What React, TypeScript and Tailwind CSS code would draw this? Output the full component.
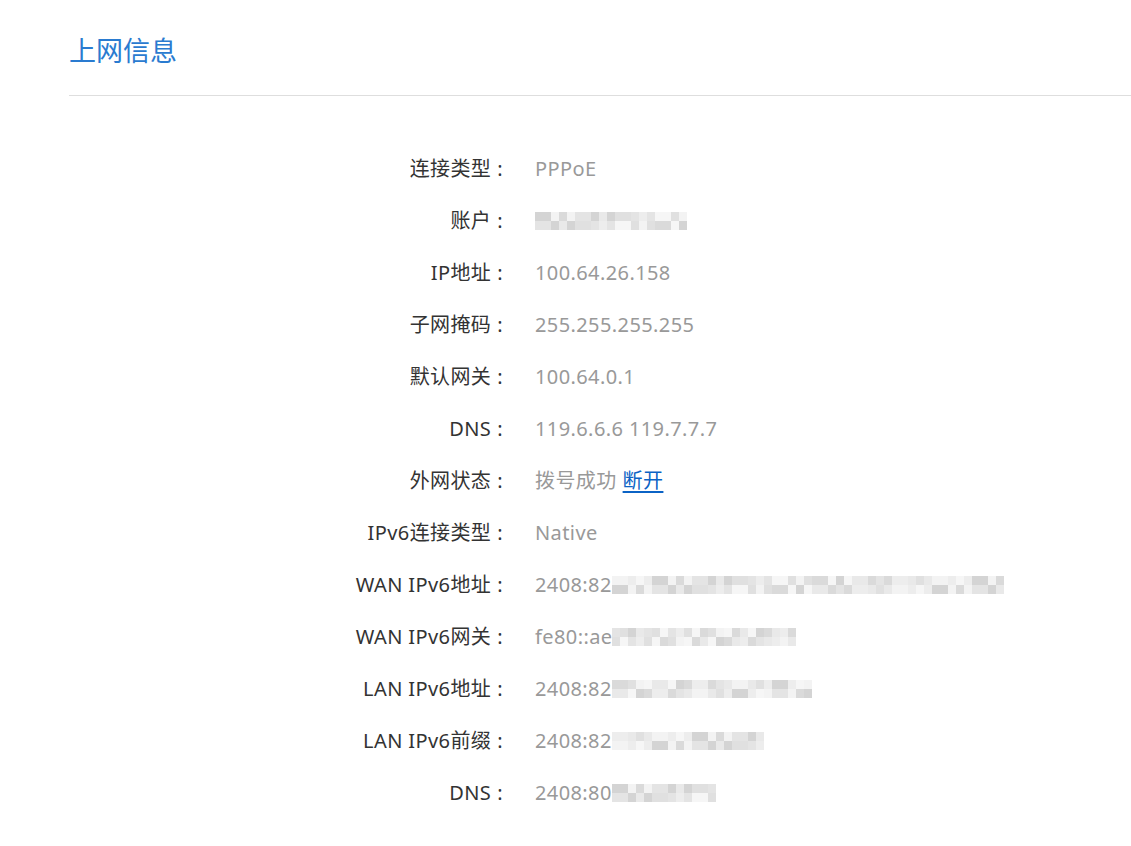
import type { ReactNode } from "react";

type Row = {
  label: string;
  value?: string;
  blur?: number;
  extra?: ReactNode;
};

const ROWS: Row[] = [
  { label: "连接类型", value: "PPPoE" },
  { label: "账户", blur: 148 },
  { label: "IP地址", value: "100.64.26.158" },
  { label: "子网掩码", value: "255.255.255.255" },
  { label: "默认网关", value: "100.64.0.1" },
  { label: "DNS", value: "119.6.6.6 119.7.7.7" },
  {
    label: "外网状态",
    value: "拨号成功",
    extra: (
      <a href="#" className="ml-[6px] text-[#0b63c5] underline underline-offset-[3px]">
        断开
      </a>
    ),
  },
  { label: "IPv6连接类型", value: "Native" },
  { label: "WAN IPv6地址", value: "2408:82", blur: 386 },
  { label: "WAN IPv6网关", value: "fe80::ae", blur: 177 },
  { label: "LAN IPv6地址", value: "2408:82", blur: 195 },
  { label: "LAN IPv6前缀", value: "2408:82", blur: 147 },
  { label: "DNS", value: "2408:80", blur: 97 },
];

const SHADES = ["#ededed", "#e4e4e4", "#dadada", "#f3f3f3", "#e0e0e0", "#e9e9e9", "#d4d4d4", "#f6f6f6"];

// pixelated redaction block
function Mosaic({ width, seed }: { width: number; seed: number }) {
  const cols = Math.ceil(width / 8);
  const cell = (r: number, c: number) =>
    SHADES[(c * 7 + r * 3 + seed * 5 + ((c * c + seed) % 5)) % SHADES.length];
  return (
    <span className="inline-flex flex-col align-middle" style={{ width }}>
      {[0, 1].map((r) => (
        <span key={r} className="flex h-[9px]">
          {Array.from({ length: cols }).map((_, c) => (
            <span key={c} className="h-full w-[8px] shrink-0" style={{ backgroundColor: cell(r, c) }} />
          ))}
        </span>
      ))}
    </span>
  );
}

export default function App() {
  return (
    <div
      className="min-h-[846px] bg-white pl-[69px]"
      style={{ fontFamily: '"Noto Sans", "Noto Sans CJK SC", sans-serif' }}
    >
      <div className="pt-[31px] pb-[24px] text-[27px] leading-[40px] text-[#2a7bd0]">上网信息</div>
      <div className="h-px bg-[#dedede]" />

      <div className="pt-[47px]">
        {ROWS.map((row, i) => (
          <div key={i} className="flex h-[52px] items-center text-[20px] tracking-[0.4px]">
            <div className="w-[437px] shrink-0 pr-[3px] text-right text-[#333333]">
              {row.label}
              <span className="ml-[6px]">:</span>
            </div>
            <div className="ml-[29px] flex items-center text-[#999999]">
              {row.value && <span>{row.value}</span>}
              {row.blur && <Mosaic width={row.blur} seed={i} />}
              {row.extra}
            </div>
          </div>
        ))}
      </div>
    </div>
  );
}
